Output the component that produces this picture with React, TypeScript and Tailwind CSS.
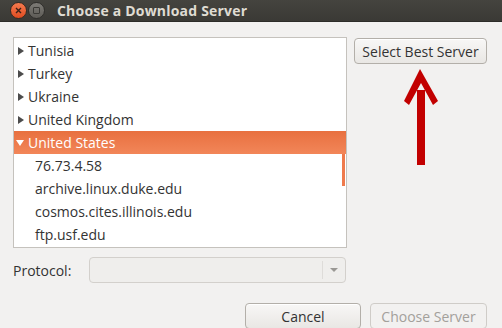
import React from 'react';

const countries = ['Tunisia', 'Turkey', 'Ukraine', 'United Kingdom'];
const servers = ['76.73.4.58', 'archive.linux.duke.edu', 'cosmos.cites.illinois.edu', 'ftp.usf.edu'];

function Collapsed() {
  return (
    <svg width="8" height="10" viewBox="0 0 8 10" className="shrink-0">
      <path d="M1 1 L7 5 L1 9 Z" fill="#4c4c4c" />
    </svg>
  );
}

function Expanded() {
  return (
    <svg width="10" height="8" viewBox="0 0 10 8" className="shrink-0">
      <path d="M1 1 L9 1 L5 7 Z" fill="#ffffff" />
    </svg>
  );
}

export default function App() {
  return (
    <div className="w-[502px] h-[328px] overflow-hidden bg-[#f2f1f0] text-[#333333] text-[14px] flex flex-col" style={{ fontFamily: '"Open Sans", "Noto Sans", sans-serif' }}>
      {/* Title bar */}
      <div className="h-[22px] shrink-0 flex items-center bg-gradient-to-b from-[#45443f] to-[#3a3935] border-b border-[#2d2c29]">
        <div className="ml-[10px] w-[17px] h-[17px] rounded-full bg-gradient-to-b from-[#f57a4e] to-[#df4b1f] border border-[#3a2a22] flex items-center justify-center">
          <svg width="7" height="7" viewBox="0 0 7 7">
            <path d="M1 1 L6 6 M6 1 L1 6" stroke="#3b2016" strokeWidth="1.4" />
          </svg>
        </div>
        <div className="ml-[1px] w-[17px] h-[17px] rounded-full bg-gradient-to-b from-[#7d7b76] to-[#5d5b56] border border-[#2f2e2b] flex items-center justify-center">
          <div className="w-[7px] h-[7px] border border-[#3a3935] rounded-[1px]" />
        </div>
        <span className="ml-[12px] font-bold text-[#dfdbd2] text-[14px] tracking-[0.2px]">Choose a Download Server</span>
      </div>

      <div className="flex-1 relative px-[13px]">
        <div className="flex items-start gap-[7px] mt-[15px]">
          {/* Tree list */}
          <div className="relative w-[334px] h-[211px] bg-white border border-[#c5c2bd] pt-[1px]">
            {countries.map((c) => (
              <div key={c} className="h-[23px] flex items-center pl-[3px] gap-[3px]">
                <Collapsed />
                <span>{c}</span>
              </div>
            ))}
            <div className="h-[23px] flex items-center pl-[1px] gap-[3px] bg-gradient-to-b from-[#e8703f] to-[#f28659] text-white">
              <Expanded />
              <span>United States</span>
            </div>
            {servers.map((s) => (
              <div key={s} className="h-[23px] flex items-center pl-[21px]">
                {s}
              </div>
            ))}
            <div className="absolute right-[1px] top-[116px] w-[3px] h-[32px] bg-[#ef7a4c]" />
          </div>

          {/* Side button */}
          <button className="mt-[1px] h-[26px] w-[133px] rounded-[4px] border border-[#b3afa9] bg-gradient-to-b from-[#f8f7f6] to-[#e9e7e4] text-[#333333] text-[14px] shadow-[inset_0_1px_0_#ffffff]">
            Select Best Server
          </button>
        </div>

        {/* Protocol row */}
        <div className="flex items-center mt-[9px] h-[26px]">
          <span className="w-[76px]">Protocol:</span>
          <div className="w-[257px] h-[26px] rounded-[4px] border border-[#d3d0cc] bg-[#efeeec] flex justify-end items-center">
            <div className="w-px h-[18px] bg-[#dedcd9]" />
            <svg width="22" height="8" viewBox="0 0 22 8">
              <path d="M7 2 L15 2 L11 6 Z" fill="#9a9894" />
            </svg>
          </div>
        </div>

        {/* Dialog buttons */}
        <div className="flex justify-end gap-[9px] mt-[20px] pr-[2px]">
          <button className="w-[116px] h-[26px] rounded-[4px] border border-[#b3afa9] bg-gradient-to-b from-[#f8f7f6] to-[#e9e7e4] text-[#333333] text-[14px] shadow-[inset_0_1px_0_#ffffff]">
            Cancel
          </button>
          <button className="w-[117px] h-[26px] rounded-[4px] border border-[#cfccc8] bg-[#f2f1f0] text-[#a3a09b] text-[14px]">
            Choose Server
          </button>
        </div>

        {/* Red annotation arrow */}
        <svg className="absolute left-[402px] top-[46px]" width="38" height="100" viewBox="0 0 38 100">
          <path d="M15 22 L15 97 L23 97 L23 22 Z" fill="#c20000" />
          <path d="M18 1 L2 33 L7 37 L19 15 L31 37 L36 33 Z" fill="#c20000" />
        </svg>
      </div>
    </div>
  );
}
